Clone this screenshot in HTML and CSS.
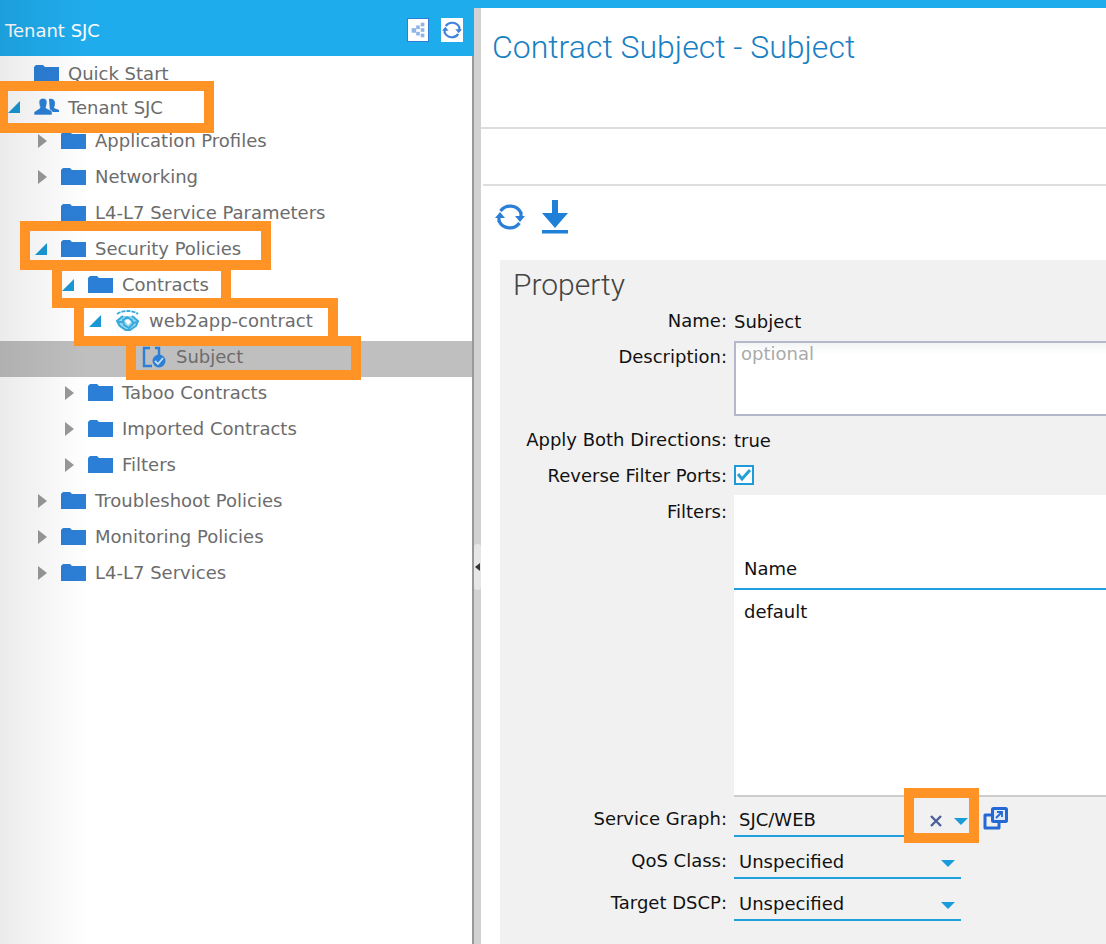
FILE: index.html
```html
<!DOCTYPE html>
<html lang="en">
<head>
<meta charset="utf-8">
<title>Contract Subject - Subject</title>
<link rel="stylesheet" href="styles.css">
</head>
<body>
<svg class="defs" aria-hidden="true">
  <symbol id="folder" viewBox="0 0 25 19"><path d="M0 3 2 1h7l2 2h14v15H0z" fill="#2c7fd6"/></symbol>
  <symbol id="closed" viewBox="0 0 12 14"><path d="M3 0v14l9-7z" fill="#999"/></symbol>
  <symbol id="open" viewBox="0 0 12 14"><path d="M12 1v12H0z" fill="#1a98d5"/></symbol>
  <symbol id="refresh" viewBox="0 0 30 28"><g fill="none" stroke="currentColor" stroke-width="3.200"><path d="M5.500 8A12 12 0 0 1 26 10"/><path d="M24.500 20A12 12 0 0 1 4 18"/></g><path d="M20 13h10l-5 6zM0 15h10l-5-6z" fill="currentColor"/><path d="M26 9v6M4 19v-6" stroke="currentColor" stroke-width="3.200"/></symbol>
</svg>
<div class="app">
  <aside class="sidebar">
    <header class="side-head">
      <span class="side-title">Tenant SJC</span>
      <button class="mini mini-share" aria-label="Collapse tree"><svg viewBox="0 0 22 24"><g fill="#8db5e8"><rect x="4" y="10" width="5" height="5"/><rect x="9" y="7" width="4" height="4"/><rect x="9" y="14" width="4" height="4"/><rect x="14" y="4" width="4" height="4"/><rect x="14" y="10" width="4" height="4"/><rect x="14" y="16" width="4" height="4"/></g></svg></button>
      <button class="mini" aria-label="Refresh tree"><svg viewBox="0 0 30 28"><use href="#refresh"/></svg></button>
    </header>
    <ul class="tree">
      <li class="row short l1"><span class="twisty"></span><svg class="icon"><use href="#folder"/></svg><span>Quick Start</span></li>
      <li class="row short l1"><svg class="twisty"><use href="#open"/></svg><svg class="icon" viewBox="0 0 25 19"><g fill="#2c7fd6"><path d="M15 1c2-1 6 0 6 4 0 3-1 4-1 5l5 2v2h-9z"/><path d="M5 4c0-5 8-5 8 0 0 3-1 4-1 6l6 3v4H0v-3l6-4c0-2-1-3-1-6z" stroke="#fff" stroke-width=".6"/></g></svg><span>Tenant SJC</span><i class="mark mark-tenant"></i></li>
      <li class="row l2"><svg class="twisty"><use href="#closed"/></svg><svg class="icon"><use href="#folder"/></svg><span>Application Profiles</span></li>
      <li class="row l2"><svg class="twisty"><use href="#closed"/></svg><svg class="icon"><use href="#folder"/></svg><span>Networking</span></li>
      <li class="row l2"><span class="twisty"></span><svg class="icon"><use href="#folder"/></svg><span>L4-L7 Service Parameters</span></li>
      <li class="row l2"><svg class="twisty"><use href="#open"/></svg><svg class="icon"><use href="#folder"/></svg><span>Security Policies</span><i class="mark mark-security"></i></li>
      <li class="row l3"><svg class="twisty"><use href="#open"/></svg><svg class="icon"><use href="#folder"/></svg><span>Contracts</span><i class="mark mark-contracts"></i></li>
      <li class="row l4"><svg class="twisty"><use href="#open"/></svg><svg class="icon icon-tall" viewBox="0 0 25 22"><path d="M2 4C7 0 18 0 23 4" fill="none" stroke="#35aadc" stroke-width="1.800" stroke-dasharray="4 1"/><path d="M6 6h13l5 5-2 5-7 5h-5l-7-5-2-5z" fill="#9ad5ef"/><g fill="none" stroke="#35aadc" stroke-width="1.800"><path d="M8 6 2 11l3 5 6 4h4l6-4 2-5-6-5"/><path d="m8 10 4-3 5 3 1 4-4 4-5-3zM2 12l6 0M23 12l-5 1"/></g><path d="m10 11 3-2 3 3-3 3z" fill="#fff"/></svg><span>web2app-contract</span><i class="mark mark-web"></i></li>
      <li class="row l5 selected"><span class="twisty"></span><svg class="icon icon-tall" viewBox="0 0 25 22"><path d="M8 2H2v18h8M13 2h4v7" fill="none" stroke="#2c7fd6" stroke-width="2.400"/><circle cx="17" cy="15" r="6.500" fill="#2c7fd6"/><path d="m13 15 3 3 5-6" fill="none" stroke="#c8dcf0" stroke-width="1.800"/></svg><span>Subject</span><i class="mark mark-subject"></i></li>
      <li class="row l3"><svg class="twisty"><use href="#closed"/></svg><svg class="icon"><use href="#folder"/></svg><span>Taboo Contracts</span></li>
      <li class="row l3"><svg class="twisty"><use href="#closed"/></svg><svg class="icon"><use href="#folder"/></svg><span>Imported Contracts</span></li>
      <li class="row l3"><svg class="twisty"><use href="#closed"/></svg><svg class="icon"><use href="#folder"/></svg><span>Filters</span></li>
      <li class="row l2"><svg class="twisty"><use href="#closed"/></svg><svg class="icon"><use href="#folder"/></svg><span>Troubleshoot Policies</span></li>
      <li class="row l2"><svg class="twisty"><use href="#closed"/></svg><svg class="icon"><use href="#folder"/></svg><span>Monitoring Policies</span></li>
      <li class="row l2"><svg class="twisty"><use href="#closed"/></svg><svg class="icon"><use href="#folder"/></svg><span>L4-L7 Services</span></li>
    </ul>
  </aside>
  <div class="splitter"><button class="grip" aria-label="Collapse sidebar"><svg viewBox="0 0 5 8"><path d="M5 0v8L0 4z" fill="#333"/></svg></button></div>
  <main class="main">
    <h1 class="title">Contract Subject - Subject</h1>
    <div class="tabs"></div>
    <div class="toolbar">
      <button class="tool" aria-label="Refresh"><svg class="tool-refresh" viewBox="0 0 30 28"><use href="#refresh"/></svg></button>
      <button class="tool" aria-label="Download"><svg class="tool-download" viewBox="0 0 28 34"><path d="M11 0h6v13h10L14 28 1 13h10zM1 30h26v3.500H1z" fill="#2080d8"/></svg></button>
    </div>
    <section class="panel">
      <h2 class="heading">Property</h2>
      <div class="form">
        <span class="label">Name:</span><span class="value">Subject</span>
        <label class="label" for="desc">Description:</label><textarea id="desc" placeholder="optional"></textarea>
        <span class="label">Apply Both Directions:</span><span class="value">true</span>
        <label class="label" for="rev">Reverse Filter Ports:</label><span class="value"><input id="rev" type="checkbox" checked></span>
        <span class="label">Filters:</span>
        <div class="filters">
          <table><thead><tr><th>Name</th></tr></thead><tbody><tr><td>default</td></tr></tbody></table>
        </div>
        <label class="label pick" for="graph">Service Graph:</label>
        <div class="combo">
          <span class="field wide"><select id="graph"><option>SJC/WEB</option></select><button class="clear" aria-label="Clear"><svg viewBox="0 0 12 12"><path d="m1 1 10 10M11 1 1 11" stroke="#4c6098" stroke-width="2.400"/></svg></button><i class="mark mark-clear"></i></span>
          <button class="tool" aria-label="Open service graph"><svg class="launch" viewBox="0 0 25 23"><path d="M8 8H2v13h14v-5" fill="#f1f1f1" stroke="#2468d4" stroke-width="3" stroke-linejoin="round"/><rect x="9.500" y="1.500" width="14" height="13" rx="1" fill="#dfe9f8" stroke="#2468d4" stroke-width="3"/><path d="m13 11 6-6M14 5h5v5" fill="none" stroke="#2468d4" stroke-width="1.800"/></svg></button>
        </div>
        <label class="label pick" for="qos">QoS Class:</label>
        <div class="combo"><span class="field"><select id="qos"><option>Unspecified</option></select></span></div>
        <label class="label pick" for="dscp">Target DSCP:</label>
        <div class="combo"><span class="field"><select id="dscp"><option>Unspecified</option></select></span></div>
      </div>
    </section>
  </main>
</div>
</body>
</html>
```
FILE: styles.css
```css
* { box-sizing: border-box; }
body { margin: 0; font: 18px "DejaVu Sans", sans-serif; color: #111; background: #fff; }
button { padding: 0; border: 0; background: none; }
svg { display: block; }
.defs { position: absolute; width: 0; height: 0; }
.app { display: flex; min-height: 100vh; overflow: hidden; }

.sidebar { position: relative; flex: none; width: 474px; display: flex; flex-direction: column; }
.sidebar::after { content: ""; position: absolute; inset: 0 auto 0 0; width: 88px; background: linear-gradient(to right, rgba(0,0,0,.08), rgba(0,0,0,0)); pointer-events: none; }
.side-head { display: flex; align-items: center; gap: 12px; height: 56px; padding: 4px 11px 0 5px; background: #1faced; color: #fff; }
.side-title { flex: 1; }
.mini { width: 22px; height: 24px; padding: 1px; background: #fff; color: #3f82dc; }
.mini svg { width: 100%; height: 100%; }
.mini-share { padding: 0; border: 1px solid #2c7fd6; }
.tree { flex: 1; margin: 0; padding: 1px 0 0; list-style: none; border-right: 2px solid #999; color: #6c6c6c; }
.row { position: relative; display: flex; align-items: center; height: 36px; padding-bottom: 5px; white-space: nowrap; }
.short { height: 34px; padding-bottom: 2px; }
.twisty { flex: none; width: 12px; height: 14px; margin-right: 14px; }
.icon { flex: none; width: 25px; height: 19px; margin-right: 9px; }
.icon-tall { height: 22px; }
.l1 { padding-left: 8px; }
.l2 { padding-left: 35px; }
.l3 { padding-left: 62px; }
.l4 { padding-left: 89px; }
.l5 { padding-left: 116px; }
.selected { background: #bfbfbf; }

.mark { position: absolute; z-index: 1; border: 10px solid #ff9326; pointer-events: none; }
.mark-tenant { left: -2px; top: -10px; width: 216px; height: 52px; }
.mark-security { left: 20px; top: -12px; width: 251px; height: 49px; }
.mark-contracts { left: 52px; top: -8px; width: 179px; height: 47px; }
.mark-web { left: 74px; top: -7px; width: 264px; height: 48px; }
.mark-subject { left: 126px; top: -5px; width: 235px; height: 44px; }
.mark-clear { right: -5px; top: -12px; width: 75px; height: 55px; }

.splitter { flex: none; display: flex; align-items: center; width: 7px; padding-top: 182px; border-top: 8px solid #1faced; background: #d2d2d2; }
.grip { display: flex; align-items: center; justify-content: center; width: 7px; height: 46px; border-radius: 4px; background: #e6e6e6; }
.grip svg { width: 5px; height: 8px; }

.main { flex: 1; min-width: 0; display: flex; flex-direction: column; border-top: 8px solid #1faced; }
.title { margin: 0; height: 121px; padding: 20px 11px 0; border-bottom: 2px solid #ddd; font: 300 32px/38px Roboto, sans-serif; color: #1880c4; white-space: nowrap; }
.tabs { height: 57px; margin-left: 2px; border-bottom: 2px solid #ddd; }
.toolbar { display: flex; align-items: center; gap: 16px; height: 74px; padding: 0 14px 12px; }
.tool { color: #2c7fd6; }
.tool-refresh { width: 30px; height: 28px; }
.tool-download { width: 28px; height: 34px; }
.panel { flex: 1; margin-left: 19px; background: #f1f1f1; }
.heading { margin: 0; height: 43px; padding: 6px 13px 0; font: 300 30px/38px Roboto, sans-serif; color: #444; }
.form { display: grid; grid-template-columns: 227px 1fr; column-gap: 7px; align-items: start; }
.label { line-height: 36px; text-align: right; white-space: nowrap; }
.value { display: flex; align-items: center; height: 36px; }
.value input { appearance: none; width: 20px; height: 20px; margin: 0 0 3px; border: 2px solid #1d9bd9; background: #fff url("data:image/svg+xml,%3Csvg xmlns='http://www.w3.org/2000/svg' viewBox='0 0 16 16'%3E%3Cpath d='m2 7 4 5 8-9' fill='none' stroke='%23249fd9' stroke-width='3'/%3E%3C/svg%3E"); }
textarea { display: block; width: 100%; height: 75px; margin: 2px 0 6px; padding: 0 5px; border: 2px solid #b4b8ca; border-right: 0; border-radius: 0; resize: none; font: inherit; background: linear-gradient(#f3f5f5, #fff 12px); }
textarea::placeholder { color: #aaa; }
.filters { height: 302px; margin: 1px 0 3px; padding-top: 54px; border-bottom: 2px solid #ccc; background: #fff; }
table { width: 100%; border-collapse: collapse; }
th, td { padding: 0 10px; text-align: left; font-weight: 400; }
th { height: 40px; border-bottom: 2px solid #1f9fdb; }
td { height: 44px; }
.pick { line-height: 37px; }
.combo { display: flex; align-items: center; gap: 9px; height: 37px; margin-bottom: 5px; }
.field { position: relative; display: block; width: 227px; height: 100%; }
.wide { width: 240px; }
select { appearance: none; width: 100%; height: 100%; padding: 4px 32px 0 5px; border: 0; border-bottom: 2px solid #1f9fdb; border-radius: 0; font: inherit; color: #111; background: url("data:image/svg+xml,%3Csvg xmlns='http://www.w3.org/2000/svg' viewBox='0 0 14 7'%3E%3Cpath d='M0 0h14L7 7z' fill='%231a9cdb'/%3E%3C/svg%3E") no-repeat right 6px bottom 10px / 14px 7px; }
.clear { position: absolute; right: 32px; top: 15px; width: 12px; height: 12px; }
.clear svg { width: 12px; height: 12px; }
.launch { width: 25px; height: 23px; }
```
